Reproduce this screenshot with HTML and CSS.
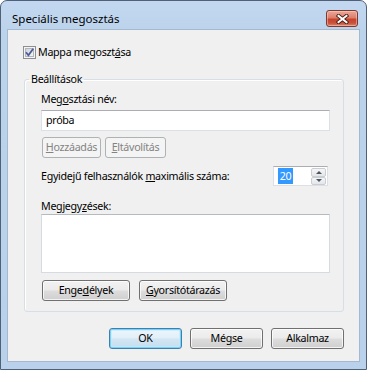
FILE: index.html
```html
<!DOCTYPE html>
<html lang="hu">
<head>
<meta charset="utf-8">
<title>Speciális megosztás</title>
<link rel="stylesheet" href="styles.css">
</head>
<body>
<div class="window">
  <div class="titlebar">
    <span class="title">Speciális megosztás</span>
    <span class="close">
      <svg width="13" height="10" viewBox="0 0 13 10">
        <path d="M2.5 1.8 L10.5 8.2 M10.5 1.8 L2.5 8.2" stroke="#4a1f18" stroke-width="3.8" stroke-linecap="square" fill="none"/>
        <path d="M2.5 1.8 L10.5 8.2 M10.5 1.8 L2.5 8.2" stroke="#ffffff" stroke-width="2" stroke-linecap="square" fill="none"/>
      </svg>
    </span>
  </div>
  <div class="client">
    <div class="check-row">
      <span class="checkbox">
        <svg width="13" height="13" viewBox="0 0 13 13">
          <defs>
            <linearGradient id="cbg" x1="0" y1="0" x2="1" y2="1">
              <stop offset="0" stop-color="#cdd1d6"/>
              <stop offset="1" stop-color="#f7f7f7"/>
            </linearGradient>
          </defs>
          <rect x="0.5" y="0.5" width="12" height="12" fill="#f4f4f4" stroke="#8e8f8f"/>
          <rect x="2.5" y="2.5" width="8" height="8" fill="url(#cbg)" stroke="#b2b6bc"/>
          <path d="M3 6.3 L5.4 9.2 L10.2 2.8" fill="none" stroke="#4b5c9c" stroke-width="1.8"/>
        </svg>
      </span>
      <span class="check-label">Mappa megoszt<u>á</u>sa</span>
    </div>

    <fieldset class="group">
      <legend>Beállítások</legend>
      <div class="label">Meg<u>o</u>sztási név:</div>
      <div class="input">próba</div>
      <div class="btn-row">
        <span class="btn disabled w-add"><u>H</u>ozzáadás</span>
        <span class="btn disabled w-del"><u>E</u>ltávolítás</span>
      </div>
      <div class="spin-row">
        <span class="spin-label">Egyidejű felhasználók <u>m</u>aximális száma:</span>
        <div class="spin">
          <span class="spin-value">20</span>
          <div class="spin-btns">
            <span class="sb up"></span>
            <span class="sb down"></span>
          </div>
        </div>
      </div>
      <div class="label notes-label">Megjegy<u>z</u>ések:</div>
      <div class="textarea"></div>
      <div class="btn-row wide">
        <span class="btn w-perm">Enge<u>d</u>élyek</span>
        <span class="btn w-perm"><u>G</u>yorsítótárazás</span>
      </div>
    </fieldset>

    <div class="footer">
      <span class="btn default w-foot">OK</span>
      <span class="btn w-foot">Mégse</span>
      <span class="btn w-foot">Alkalmaz</span>
    </div>
  </div>
</div>
</body>
</html>
```

FILE: styles.css
```css
html, body {
  margin: 0;
  padding: 0;
  background: #ffffff;
}

body {
  font-family: "Noto Sans", "Open Sans", sans-serif;
  font-size: 10.7px;
  line-height: 15px;
  letter-spacing: -0.3px;
  color: #000000;
}

u {
  text-decoration: underline;
  text-underline-offset: 1px;
}

.window {
  width: 367px;
  height: 370px;
  box-sizing: border-box;
  border: 1px solid #4e6177;
  border-radius: 7px 7px 0 0;
  background: linear-gradient(to bottom, #c3d8f0 0px, #bcd3ec 30px, #b9d1ea 100%);
  display: flex;
  flex-direction: column;
}

.titlebar {
  height: 28px;
  display: flex;
  align-items: flex-start;
  justify-content: space-between;
  padding: 0 8px 0 11px;
}

.title {
  margin-top: 10px;
  font-size: 11.5px;
  letter-spacing: 0;
  color: #000000;
}

.close {
  margin-top: 9px;
  width: 32px;
  height: 17px;
  box-sizing: border-box;
  border: 1px solid #7d3a30;
  border-radius: 3px;
  background: linear-gradient(to bottom, #eba89b 0%, #dc7f6c 45%, #c7442d 55%, #c9513a 80%, #dd866b 100%);
  box-shadow: inset 0 0 0 1px rgba(255, 220, 210, 0.45);
  display: flex;
  align-items: center;
  justify-content: center;
}

.close svg {
  display: block;
}

.client {
  flex: 1;
  margin: 0 6px 7px 6px;
  border: 1px solid #a4b8cf;
  background: #f0f0f0;
  display: flex;
  flex-direction: column;
}

.check-row {
  margin: 16px 0 0 15px;
  height: 13px;
  display: flex;
  align-items: center;
  gap: 2px;
}

.checkbox svg {
  display: block;
}

.group {
  margin: 13px 0 0 16px;
  width: 320px;
  box-sizing: border-box;
  border: 1px solid #d5dfe5;
  border-radius: 3px;
  box-shadow: inset 1px 1px 0 #ffffff;
  padding: 6px 13px 10px 16px;
  min-width: 0;
}

.group legend {
  padding: 0 2px;
  margin-left: -12px;
  line-height: 15px;
}

.label {
  line-height: 13px;
}

.input {
  margin-top: 4px;
  height: 21px;
  box-sizing: border-box;
  border: 1px solid #dbdfe6;
  border-top-color: #abadb3;
  background: #ffffff;
  padding: 0 4px;
  line-height: 19px;
}

.btn-row {
  margin-top: 6px;
  display: flex;
  gap: 4px;
  padding-left: 1px;
}

.btn-row.wide {
  margin-top: 7px;
  gap: 9px;
}

.btn {
  height: 21px;
  box-sizing: border-box;
  border: 1px solid #707070;
  border-radius: 3px;
  background: linear-gradient(to bottom, #f2f2f2 0%, #ebebeb 48%, #dddddd 52%, #cfcfcf 100%);
  box-shadow: inset 0 0 0 1px rgba(255, 255, 255, 0.75);
  display: flex;
  align-items: center;
  justify-content: center;
  line-height: 15px;
  color: #000000;
}

.btn.disabled {
  border-color: #adb2b5;
  background: #f4f4f4;
  box-shadow: none;
  color: #838383;
}

.btn.default {
  border-color: #3c7fb1;
  box-shadow: inset 0 0 0 1px #7cd2f4, inset 0 0 0 2px rgba(190, 235, 252, 0.6);
  background: linear-gradient(to bottom, #eaf5fc 0%, #e3eff8 48%, #d2e5f3 52%, #c6deef 100%);
}

.w-add { width: 59px; }
.w-del { width: 61px; }
.w-perm { width: 88px; }
.w-foot { width: 73px; }

.spin-row {
  margin-top: 8px;
  height: 20px;
  display: flex;
  align-items: center;
}

.spin {
  margin-left: auto;
  margin-right: 2px;
  width: 55px;
  height: 20px;
  box-sizing: border-box;
  border: 1px solid #dbdfe6;
  border-top-color: #abadb3;
  background: #ffffff;
  display: flex;
  align-items: flex-start;
  padding: 1px 1px 1px 4px;
}

.spin-value {
  background: #3399ff;
  color: #ffffff;
  height: 16px;
  width: 15px;
  line-height: 16px;
  text-align: center;
}

.spin-btns {
  margin-left: auto;
  width: 15px;
  height: 17px;
  display: flex;
  flex-direction: column;
}

.sb {
  flex: 1;
  box-sizing: border-box;
  border: 1px solid #c9ced4;
  border-radius: 2px;
  background: linear-gradient(to bottom, #f6f6f6, #e4e6e9);
  display: flex;
  align-items: center;
  justify-content: center;
}

.sb::after {
  content: "";
  width: 0;
  height: 0;
  border-left: 3px solid transparent;
  border-right: 3px solid transparent;
}

.sb.up::after {
  border-bottom: 3px solid #4d5561;
}

.sb.down::after {
  border-top: 3px solid #4d5561;
}

.notes-label {
  margin-top: 14px;
}

.textarea {
  margin-top: 1px;
  height: 59px;
  box-sizing: border-box;
  border: 1px solid #d6dbe2;
  border-top-color: #b5b9c0;
  background: #ffffff;
}

.footer {
  margin-top: 16px;
  display: flex;
  justify-content: flex-end;
  gap: 8px;
  padding-right: 15px;
}
```
